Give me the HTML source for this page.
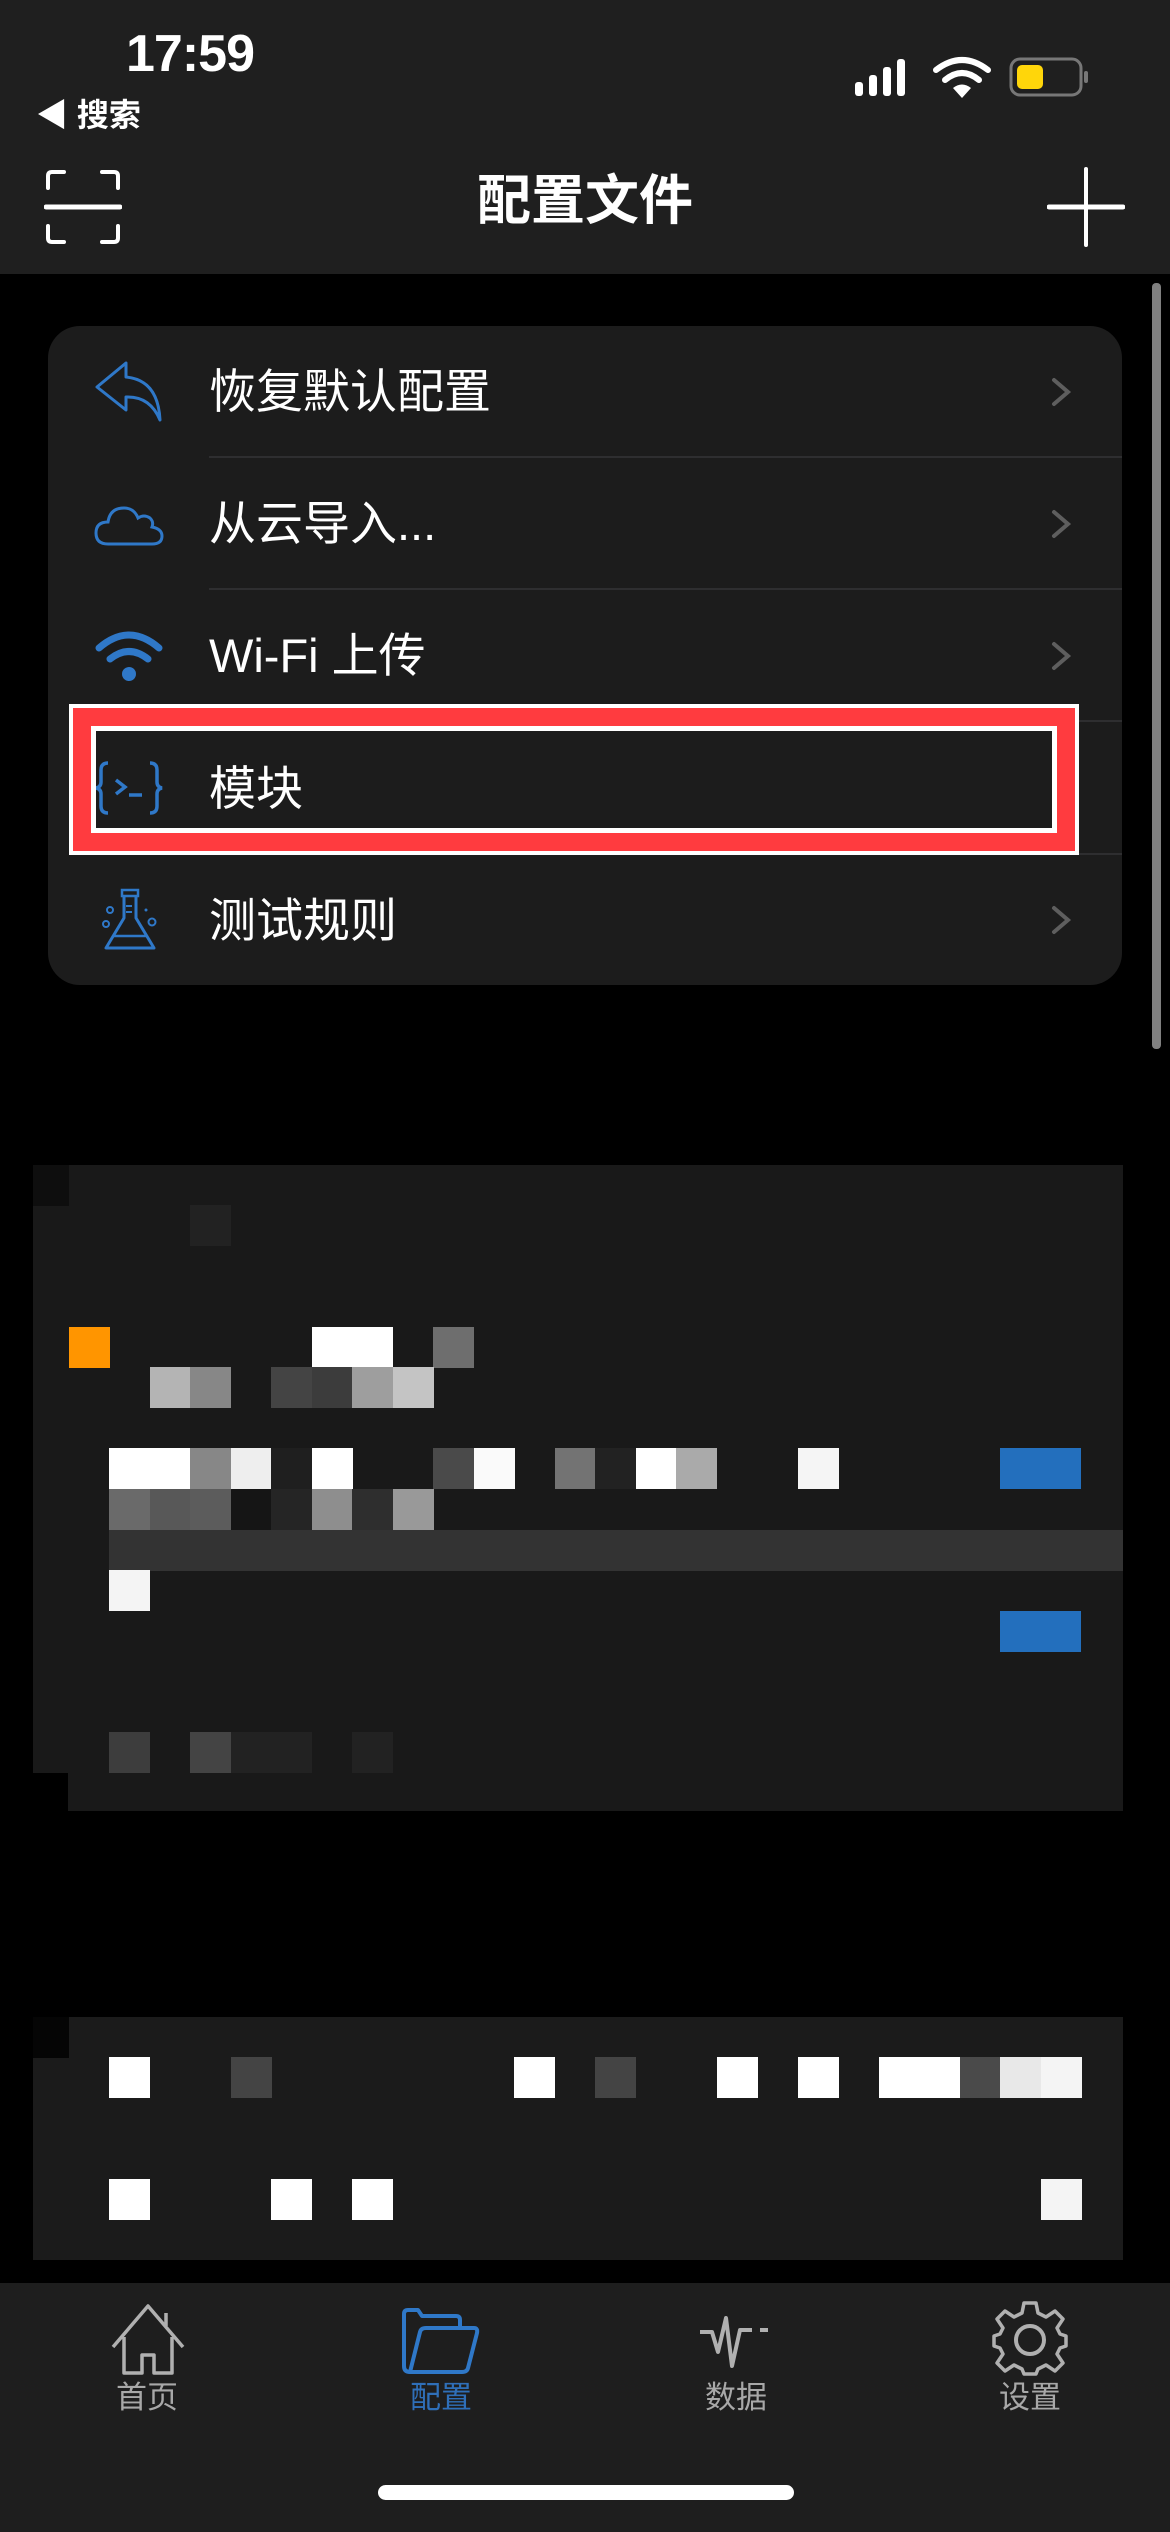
<!DOCTYPE html>
<html><head><meta charset="utf-8"><style>
*{margin:0;padding:0;box-sizing:border-box}
body{width:1170px;height:2532px;background:#000;position:relative;overflow:hidden;font-family:"Liberation Sans","Noto Sans CJK SC",sans-serif;color:#fff}
.a{position:absolute}
.c{position:absolute;width:41px;height:41px}
.row{position:absolute;left:209px;font-size:47px;line-height:1;color:#fff}
.sep{position:absolute;left:209px;right:48px;height:2px;background:#2e2e30}
.chev{position:absolute;left:1050px}
.tl{position:absolute;font-size:31px;color:#a8a8a8;width:140px;text-align:center;top:2372px}
</style></head><body>
<!-- header -->
<div class="a" style="left:0;top:0;width:1170px;height:274px;background:#1f1f1f"></div>
<div class="a" style="left:126px;top:24px;font-size:52px;font-weight:bold;letter-spacing:-1px">17:59</div>
<div class="a" style="left:36px;top:90px;font-size:32px;font-weight:bold">◀ 搜索</div>
<svg class="a" style="left:852px;top:56px" width="244" height="44" viewBox="0 0 244 44">
<rect x="3" y="26" width="8" height="14" rx="3" fill="#fff"/><rect x="17" y="19" width="8" height="21" rx="3" fill="#fff"/><rect x="31" y="11" width="8" height="29" rx="3" fill="#fff"/><rect x="45" y="3" width="8" height="37" rx="3" fill="#fff"/>
<path d="M84 14 Q110 -6 136 14" stroke="#fff" stroke-width="6" fill="none" stroke-linecap="round"/>
<path d="M93 24 Q110 10 127 24" stroke="#fff" stroke-width="6" fill="none" stroke-linecap="round"/>
<path d="M101 32 L110 42 L119 32 Q110 25 101 32Z" fill="#fff"/>
<rect x="159" y="3" width="70" height="36" rx="9" stroke="#777" stroke-width="3" fill="none"/>
<rect x="165" y="9" width="26" height="24" rx="5" fill="#ffd60a"/>
<rect x="232" y="15" width="4" height="12" rx="2" fill="#777"/>
</svg>
<svg class="a" style="left:44px;top:168px" width="78" height="78" viewBox="0 0 78 78">
<path d="M4 20 V8 Q4 4 8 4 H20 M58 4 H70 Q74 4 74 8 V20 M4 58 V70 Q4 74 8 74 H20 M58 74 H70 Q74 74 74 70 V58" stroke="#fff" stroke-width="4" fill="none" stroke-linecap="round"/>
<line x1="2" y1="39" x2="76" y2="39" stroke="#fff" stroke-width="5" stroke-linecap="round"/>
</svg>
<div class="a" style="left:0;width:1170px;top:172px;text-align:center;font-size:54px;font-weight:bold;line-height:1.1">配置文件</div>
<svg class="a" style="left:1047px;top:167px" width="78" height="80"><line x1="39" y1="2" x2="39" y2="78" stroke="#fff" stroke-width="4" stroke-linecap="round"/><line x1="2" y1="40" x2="76" y2="40" stroke="#fff" stroke-width="5" stroke-linecap="round"/></svg>
<!-- scrollbar -->
<div class="a" style="left:1152px;top:283px;width:9px;height:766px;background:#808080;border-radius:4px"></div>
<!-- card -->
<div class="a" style="left:48px;top:326px;width:1074px;height:659px;background:#1c1c1c;border-radius:32px"></div>
<div class="sep" style="top:456px"></div><div class="sep" style="top:588px"></div><div class="sep" style="top:720px"></div><div class="sep" style="top:853px"></div>
<div class="row" style="top:368px">恢复默认配置</div>
<div class="row" style="top:500px">从云导入...</div>
<div class="row" style="top:632px">Wi-Fi 上传</div>
<div class="row" style="top:765px">模块</div>
<div class="row" style="top:897px">测试规则</div>
<svg class="chev" style="top:376px" width="24" height="32"><path d="M4 4 L18 16 L4 28" stroke="#5e5e5e" stroke-width="4" fill="none" stroke-linecap="round"/></svg>
<svg class="chev" style="top:508px" width="24" height="32"><path d="M4 4 L18 16 L4 28" stroke="#5e5e5e" stroke-width="4" fill="none" stroke-linecap="round"/></svg>
<svg class="chev" style="top:640px" width="24" height="32"><path d="M4 4 L18 16 L4 28" stroke="#5e5e5e" stroke-width="4" fill="none" stroke-linecap="round"/></svg>
<svg class="chev" style="top:904px" width="24" height="32"><path d="M4 4 L18 16 L4 28" stroke="#5e5e5e" stroke-width="4" fill="none" stroke-linecap="round"/></svg>
<!-- icons -->
<svg class="a" style="left:94px;top:360px" width="70" height="64" viewBox="0 0 70 64"><path d="M32 3 L3 27 L32 50 V37 Q56 36 66 60 Q64 20 32 17 Z" stroke="#2f78c8" stroke-width="3" fill="none" stroke-linejoin="round"/></svg>
<svg class="a" style="left:94px;top:500px" width="70" height="48" viewBox="0 0 70 48"><path d="M14 44 Q2 44 2 33 Q2 22 14 22 Q16 8 30 8 Q40 8 44 18 Q50 14 56 18 Q60 22 58 27 Q68 29 68 36 Q68 44 58 44 Z" stroke="#2f78c8" stroke-width="3" fill="none"/></svg>
<svg class="a" style="left:94px;top:628px" width="70" height="56" viewBox="0 0 70 56"><path d="M5 20 Q35 -6 65 20" stroke="#2f78c8" stroke-width="7" fill="none" stroke-linecap="round"/><path d="M16 31 Q35 16 54 31" stroke="#2f78c8" stroke-width="7" fill="none" stroke-linecap="round"/><circle cx="35" cy="46" r="7" fill="#2f78c8"/></svg>
<svg class="a" style="left:94px;top:760px" width="70" height="56" viewBox="0 0 70 56"><path d="M14 3 Q7 3 7 10 V22 Q7 27 2 28 Q7 29 7 34 V46 Q7 53 14 53" stroke="#2f78c8" stroke-width="3.5" fill="none"/><path d="M56 3 Q63 3 63 10 V22 Q63 27 68 28 Q63 29 63 34 V46 Q63 53 56 53" stroke="#2f78c8" stroke-width="3.5" fill="none"/><path d="M22 20 L31 27 L22 34" stroke="#2f78c8" stroke-width="3.5" fill="none"/><line x1="35" y1="35" x2="48" y2="35" stroke="#2f78c8" stroke-width="3.5"/></svg>
<svg class="a" style="left:100px;top:888px" width="60" height="66" viewBox="0 0 60 66"><rect x="22" y="2" width="16" height="6" stroke="#2f78c8" stroke-width="2.5" fill="none"/><path d="M24 8 V30 L6 60 H54 L36 30 V8" stroke="#2f78c8" stroke-width="3" fill="none" stroke-linejoin="round"/><line x1="14" y1="48" x2="46" y2="48" stroke="#2f78c8" stroke-width="2.5"/><line x1="26" y1="18" x2="32" y2="18" stroke="#2f78c8" stroke-width="2"/><line x1="26" y1="24" x2="32" y2="24" stroke="#2f78c8" stroke-width="2"/><circle cx="10" cy="22" r="3" stroke="#2f78c8" stroke-width="2" fill="none"/><circle cx="6" cy="36" r="3" stroke="#2f78c8" stroke-width="2" fill="none"/><circle cx="52" cy="34" r="3.5" stroke="#2f78c8" stroke-width="2" fill="none"/><circle cx="46" cy="22" r="1.5" fill="#2f78c8"/></svg>
<!-- red highlight -->
<div class="a" style="left:69px;top:704px;width:1010px;height:151px;border:4px solid #fff"></div>
<div class="a" style="left:73px;top:708px;width:1002px;height:143px;border:18px solid #ff3b3f"></div>
<div class="a" style="left:91px;top:726px;width:966px;height:107px;border:5px solid #fff"></div>
<!-- pixel block 1 -->
<div class="a" style="left:33px;top:1165px;width:1090px;height:646px;background:#191919"></div>
<div class="a" style="left:0;top:1773px;width:68px;height:40px;background:#000"></div>
<div class="c" style="left:33px;top:1165px;width:36px;background:#0e0e0e"></div>
<div class="c" style="left:190px;top:1205px;background:#222"></div>
<div class="c" style="left:69px;top:1327px;background:#ff9500"></div>
<div class="c" style="left:312px;top:1327px;width:81px;background:#fff"></div>
<div class="c" style="left:433px;top:1327px;background:#6e6e6e"></div>
<div class="c" style="left:150px;top:1367px;background:#b4b4b4"></div>
<div class="c" style="left:190px;top:1367px;background:#878787"></div>
<div class="c" style="left:271px;top:1367px;background:#444"></div>
<div class="c" style="left:312px;top:1367px;background:#3c3c3c"></div>
<div class="c" style="left:352px;top:1367px;background:#9e9e9e"></div>
<div class="c" style="left:393px;top:1367px;background:#c4c4c4"></div>
<div class="c" style="left:109px;top:1448px;width:81px;background:#fff"></div>
<div class="c" style="left:190px;top:1448px;background:#878787"></div>
<div class="c" style="left:231px;top:1448px;background:#eee"></div>
<div class="c" style="left:271px;top:1448px;background:#1f1f1f"></div>
<div class="c" style="left:312px;top:1448px;background:#fff"></div>
<div class="c" style="left:433px;top:1448px;background:#4a4a4a"></div>
<div class="c" style="left:474px;top:1448px;background:#fafafa"></div>
<div class="c" style="left:555px;top:1448px;background:#737373"></div>
<div class="c" style="left:595px;top:1448px;background:#222"></div>
<div class="c" style="left:636px;top:1448px;background:#fff"></div>
<div class="c" style="left:676px;top:1448px;background:#aaa"></div>
<div class="c" style="left:798px;top:1448px;background:#f5f5f5"></div>
<div class="c" style="left:1000px;top:1448px;width:81px;background:#236fbd"></div>
<div class="c" style="left:109px;top:1489px;background:#6a6a6a"></div>
<div class="c" style="left:150px;top:1489px;background:#585858"></div>
<div class="c" style="left:190px;top:1489px;background:#5c5c5c"></div>
<div class="c" style="left:231px;top:1489px;background:#151515"></div>
<div class="c" style="left:271px;top:1489px;background:#252525"></div>
<div class="c" style="left:312px;top:1489px;background:#8e8e8e"></div>
<div class="c" style="left:352px;top:1489px;background:#2e2e2e"></div>
<div class="c" style="left:393px;top:1489px;background:#999"></div>
<div class="c" style="left:109px;top:1530px;width:1014px;background:#333"></div>
<div class="c" style="left:109px;top:1570px;background:#f4f4f4"></div>
<div class="c" style="left:1000px;top:1611px;width:81px;background:#236fbd"></div>
<div class="c" style="left:109px;top:1732px;background:#3d3d3d"></div>
<div class="c" style="left:190px;top:1732px;background:#444"></div>
<div class="c" style="left:231px;top:1732px;width:81px;background:#222"></div>
<div class="c" style="left:352px;top:1732px;background:#222"></div>
<!-- pixel block 2 -->
<div class="a" style="left:33px;top:2017px;width:1090px;height:243px;background:#1b1b1b"></div>
<div class="c" style="left:33px;top:2017px;width:36px;background:#050505"></div>
<div class="c" style="left:109px;top:2057px;background:#fff"></div>
<div class="c" style="left:231px;top:2057px;background:#444"></div>
<div class="c" style="left:514px;top:2057px;background:#fff"></div>
<div class="c" style="left:595px;top:2057px;background:#444"></div>
<div class="c" style="left:717px;top:2057px;background:#fff"></div>
<div class="c" style="left:798px;top:2057px;background:#fff"></div>
<div class="c" style="left:879px;top:2057px;width:81px;background:#fff"></div>
<div class="c" style="left:960px;top:2057px;background:#4a4a4a"></div>
<div class="c" style="left:1000px;top:2057px;background:#e8e8e8"></div>
<div class="c" style="left:1041px;top:2057px;background:#f4f4f4"></div>
<div class="c" style="left:109px;top:2179px;background:#fff"></div>
<div class="c" style="left:271px;top:2179px;background:#fff"></div>
<div class="c" style="left:352px;top:2179px;background:#fff"></div>
<div class="c" style="left:1041px;top:2179px;background:#f4f4f4"></div>
<!-- tab bar -->
<div class="a" style="left:0;top:2283px;width:1170px;height:249px;background:#1e1e1e"></div>
<svg class="a" style="left:110px;top:2303px" width="76" height="72" viewBox="0 0 76 72"><path d="M3 44 L38 3 L73 44 M56 23 V10 M14 34 V70 H32 V52 H44 V70 H62 V34" stroke="#b0b0b0" stroke-width="3.5" fill="none" stroke-linejoin="round"/></svg>
<svg class="a" style="left:402px;top:2306px" width="78" height="70" viewBox="0 0 78 70"><path d="M8 66 Q2 66 2 60 V8 Q2 4 6 4 H16 L20 10 H54 Q58 10 58 14 V24" stroke="#2f78c8" stroke-width="4" fill="none" stroke-linejoin="round"/><path d="M8 66 L18 26 Q19 22 24 22 H72 Q76 22 75 27 L66 62 Q65 66 60 66 Z" stroke="#2f78c8" stroke-width="4" fill="none" stroke-linejoin="round"/></svg>
<svg class="a" style="left:698px;top:2310px" width="76" height="62" viewBox="0 0 76 62"><path d="M2 22 H14 L20 42 L28 8 L34 56 L42 20 H54" stroke="#b0b0b0" stroke-width="4" fill="none" stroke-linejoin="round"/><line x1="62" y1="20" x2="70" y2="20" stroke="#b0b0b0" stroke-width="4"/></svg>
<svg class="a" style="left:992px;top:2300px" width="76" height="76" viewBox="0 0 76 76"><path d="M32 3 H44 L46 13 L54 17 L63 11 L71 19 L65 28 L68 34 L74 36 V46 L68 48 L65 54 L71 63 L63 71 L54 65 L46 69 L44 74 H32 L30 69 L22 65 L13 71 L5 63 L11 54 L8 48 L2 46 V36 L8 34 L11 28 L5 19 L13 11 L22 17 L30 13 Z" stroke="#b0b0b0" stroke-width="3.5" fill="none" stroke-linejoin="round"/><circle cx="38" cy="40" r="14" stroke="#b0b0b0" stroke-width="4" fill="none"/></svg>
<div class="tl" style="left:77px">首页</div>
<div class="tl" style="left:371px;color:#2f6fb8">配置</div>
<div class="tl" style="left:666px">数据</div>
<div class="tl" style="left:960px">设置</div>
<div class="a" style="left:378px;top:2485px;width:416px;height:15px;background:#fff;border-radius:8px"></div>
</body></html>
